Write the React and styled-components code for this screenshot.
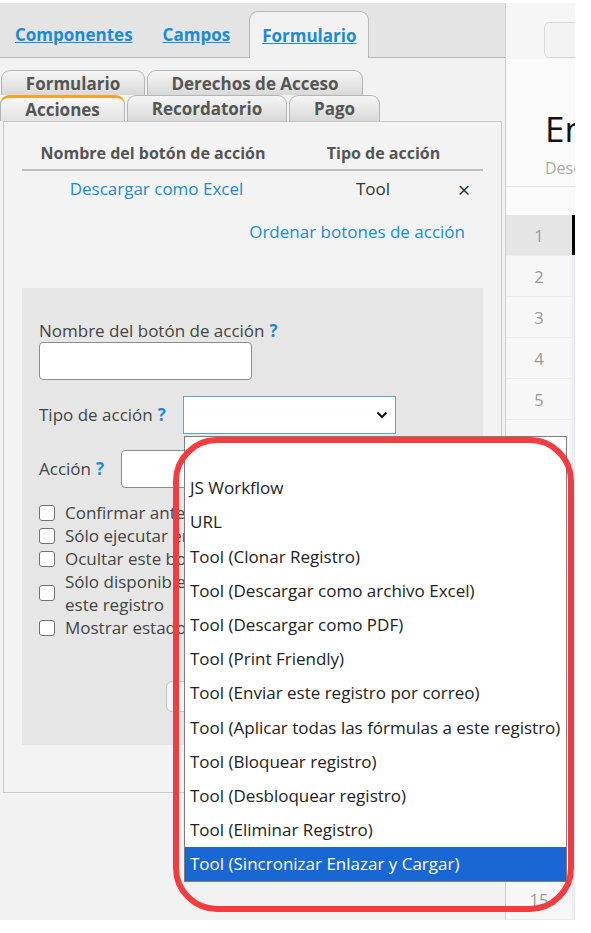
import React from 'react'
import styled, { createGlobalStyle } from 'styled-components'

const GlobalStyle = createGlobalStyle`
  body {
    margin: 0;
    background: #ffffff;
    font-family: "Open Sans", "Noto Sans", sans-serif;
  }
`

const Frame = styled.div`
  position: relative;
  display: flex;
  width: 575px;
  height: 917px;
  margin-top: 3px;
  background: #f2f2f2;
`

const LeftPane = styled.div`
  width: 505px;
  border-right: 1px solid #cfcfcf;
  display: flex;
  flex-direction: column;
`

const TopBar = styled.div`
  height: 54px;
  background: #e4e4e4;
  border-bottom: 1px solid #b8b8b8;
  display: flex;
  align-items: flex-end;
`

const TopTab = styled.a`
  height: 46px;
  display: flex;
  align-items: center;
  padding: 0 ${p => (p.$active ? 12 : 15)}px;
  margin-left: ${p => (p.$active ? 4 : 0)}px;
  font-size: 17px;
  font-weight: 700;
  color: #1b8bd3;
  text-decoration: underline;
  box-sizing: border-box;
  ${p =>
    p.$active &&
    `
    height: 47px;
    margin-bottom: -1px;
    background: #f2f2f2;
    border: 1px solid #b8b8b8;
    border-bottom: none;
    border-radius: 9px 9px 0 0;
  `}
`

const SubTabs = styled.div`
  padding-top: 12px;
`

const TabRow = styled.div`
  display: flex;
  gap: 2px;
  padding-left: ${p => p.$indent}px;
`

const SubTab = styled.div`
  width: ${p => p.$w}px;
  height: ${p => p.$h}px;
  box-sizing: border-box;
  border: 1px solid #b4b4b4;
  border-bottom: none;
  border-radius: 9px 9px 0 0;
  background: linear-gradient(#f6f6f6, #d8d8d8);
  font-size: 17px;
  font-weight: 700;
  color: #555;
  text-align: center;
  line-height: ${p => p.$h}px;
  ${p =>
    p.$active &&
    `
    border-top: 3px solid #f3a52a;
    line-height: ${p.$h - 3}px;
    background: linear-gradient(#f7f7f7, #e2e2e2);
  `}
`

const Panel = styled.div`
  margin-left: 3px;
  width: 499px;
  height: 672px;
  box-sizing: border-box;
  border: 1px solid #c9c9c9;
  background: #f3f3f3;
  padding: 14px 18px;
`

const HeadRow = styled.div`
  display: grid;
  grid-template-columns: 262px 1fr;
  height: 33px;
  border-bottom: 2px solid #bdbdbd;
  align-items: center;
  text-align: center;
  font-size: 16px;
  font-weight: 700;
  color: #555;
`

const DataRow = styled.div`
  display: grid;
  grid-template-columns: 269px 164px 18px;
  height: 35px;
  align-items: center;
  text-align: center;
  font-size: 17px;
  color: #333;
`

const LinkText = styled.span`
  color: #1b8bd3;
  font-size: 17px;
`

const CloseMark = styled.span`
  font-size: 22px;
  line-height: 22px;
  color: #333;
`

const SortLink = styled.div`
  margin-top: 14px;
  padding-right: 18px;
  text-align: right;
  line-height: 24px;
`

const FormBox = styled.div`
  margin-top: 44px;
  height: 457px;
  box-sizing: border-box;
  background: #e6e6e6;
  padding: 32px 17px 0;
  display: flex;
  flex-direction: column;
`

const Label = styled.label`
  font-size: 17px;
  color: #444;
  line-height: 22px;
  width: ${p => (p.$w ? `${p.$w}px` : 'auto')};
  flex-shrink: 0;
`

const Help = styled.span`
  color: #1b8bd3;
  font-weight: 700;
  margin-left: 5px;
`

const TextInput = styled.div`
  width: ${p => p.$w}px;
  height: 38px;
  box-sizing: border-box;
  background: #fff;
  border: 1px solid #8c8c8c;
  border-radius: 4px;
`

const InlineRow = styled.div`
  display: flex;
  align-items: center;
  margin-top: 16px;
`

const SelectWrap = styled.div`
  position: relative;
`

const SelectBox = styled.div`
  width: 213px;
  height: 38px;
  box-sizing: border-box;
  background: #fff;
  border: 1px solid #5aa3d9;
  display: flex;
  align-items: center;
  justify-content: flex-end;
  padding-right: 6px;
`

const Dropdown = styled.div`
  position: absolute;
  top: 40px;
  left: 1px;
  width: 383px;
  box-sizing: border-box;
  background: #fff;
  border: 1px solid #7d7d7d;
  z-index: 5;
`

const Option = styled.div`
  height: 34.2px;
  line-height: 34px;
  padding-left: 5px;
  font-size: 17px;
  color: ${p => (p.$selected ? '#fff' : '#222')};
  background: ${p => (p.$selected ? '#1967d2' : 'transparent')};
  white-space: nowrap;
`

const CheckList = styled.div`
  margin-top: 13px;
  display: flex;
  flex-direction: column;
`

const CheckRow = styled.div`
  display: flex;
  align-items: center;
  gap: 10px;
  font-size: 17px;
  line-height: 23px;
  color: #444;
  white-space: nowrap;
`

const Box = styled.span`
  width: 16px;
  height: 16px;
  box-sizing: border-box;
  border: 1.5px solid #707070;
  border-radius: 3px;
  background: #fff;
  flex-shrink: 0;
`

const SaveButton = styled.div`
  align-self: center;
  margin-top: 42px;
  width: 174px;
  height: 31px;
  box-sizing: border-box;
  border: 1px solid #c3c3c3;
  border-radius: 6px;
  background: #f5f5f5;
  font-size: 15px;
  color: #333;
  text-align: center;
  line-height: 29px;
`

const RightPane = styled.div`
  flex: 1;
  overflow: hidden;
  background: #fafafa;
  display: flex;
  flex-direction: column;
`

const RightTop = styled.div`
  height: 62px;
  box-sizing: border-box;
  background: #f6f6f6;
  padding: 19px 0 0 38px;
`

const GhostButton = styled.div`
  width: 80px;
  height: 36px;
  box-sizing: border-box;
  border: 1px solid #dadada;
  border-radius: 5px;
  background: #f3f3f3;
`

const Title = styled.div`
  margin-top: 51px;
  padding-left: 39px;
  font-size: 35px;
  line-height: 38px;
  color: #111;
  white-space: nowrap;
`

const SubTitle = styled.div`
  margin-top: 9px;
  padding-left: 39px;
  font-size: 16px;
  line-height: 22px;
  color: #aaa;
  white-space: nowrap;
`

const Grid = styled.div`
  margin-top: 7px;
  border-top: 1px solid #e6e6e6;
  padding-top: 28px;
  display: flex;
  flex-direction: column;
`

const NumRow = styled.div`
  display: flex;
  height: ${p => p.$h}px;
  flex-shrink: 0;
  border-bottom: 1px solid #ececec;
`

const NumCell = styled.div`
  width: 66px;
  flex-shrink: 0;
  display: flex;
  align-items: center;
  justify-content: center;
  font-size: 16.5px;
  color: #9a9a9a;
  background: ${p => (p.$on ? '#e5e5e5' : '#f7f7f7')};
`

const Marker = styled.div`
  width: 3px;
  background: ${p => (p.$on ? '#000' : '#e9ecf3')};
`

const Annotation = styled.div`
  position: absolute;
  left: 173px;
  top: 434px;
  width: 401px;
  height: 475px;
  box-sizing: border-box;
  border: 6px solid #f33c40;
  border-radius: 44px;
  pointer-events: none;
  z-index: 10;
`

const Chevron = () => (
  <svg width="14" height="14" viewBox="0 0 14 14">
    <path d="M2.5 4.5 L7 9 L11.5 4.5" fill="none" stroke="#111" strokeWidth="2" />
  </svg>
)

const OPTIONS = [
  '',
  'JS Workflow',
  'URL',
  'Tool (Clonar Registro)',
  'Tool (Descargar como archivo Excel)',
  'Tool (Descargar como PDF)',
  'Tool (Print Friendly)',
  'Tool (Enviar este registro por correo)',
  'Tool (Aplicar todas las fórmulas a este registro)',
  'Tool (Bloquear registro)',
  'Tool (Desbloquear registro)',
  'Tool (Eliminar Registro)',
  'Tool (Sincronizar Enlazar y Cargar)',
]

const ROWS = [
  { n: 1, h: 40 },
  { n: 2, h: 40 },
  { n: 3, h: 40 },
  { n: 4, h: 40 },
  { n: 5, h: 40 },
  { n: 6, h: 50 },
  { n: 7, h: 50 },
  { n: 8, h: 50 },
  { n: 9, h: 50 },
  { n: 10, h: 50 },
  { n: 11, h: 50 },
  { n: 12, h: 50 },
  { n: 13, h: 50 },
  { n: 14, h: 50 },
  { n: 15, h: 40 },
]

export default function App() {
  return (
    <>
      <GlobalStyle />
      <Frame>
        <LeftPane>
          <TopBar>
            <TopTab>Componentes</TopTab>
            <TopTab>Campos</TopTab>
            <TopTab $active>Formulario</TopTab>
          </TopBar>

          <SubTabs>
            <TabRow $indent={1}>
              <SubTab $w={144} $h={25}>Formulario</SubTab>
              <SubTab $w={216} $h={25}>Derechos de Acceso</SubTab>
            </TabRow>
            <TabRow $indent={0}>
              <SubTab $w={125} $h={26} $active>Acciones</SubTab>
              <SubTab $w={160} $h={26}>Recordatorio</SubTab>
              <SubTab $w={91} $h={26}>Pago</SubTab>
            </TabRow>
          </SubTabs>

          <Panel>
            <HeadRow>
              <span>Nombre del botón de acción</span>
              <span>Tipo de acción</span>
            </HeadRow>
            <DataRow>
              <LinkText>Descargar como Excel</LinkText>
              <span>Tool</span>
              <CloseMark>×</CloseMark>
            </DataRow>
            <SortLink>
              <LinkText>Ordenar botones de acción</LinkText>
            </SortLink>

            <FormBox>
              <Label>
                Nombre del botón de acción<Help>?</Help>
              </Label>
              <TextInput $w={213} />

              <InlineRow>
                <Label $w={144}>
                  Tipo de acción<Help>?</Help>
                </Label>
                <SelectWrap>
                  <SelectBox>
                    <Chevron />
                  </SelectBox>
                  <Dropdown>
                    {OPTIONS.map((o, i) => (
                      <Option key={i} $selected={i === OPTIONS.length - 1}>
                        {o}
                      </Option>
                    ))}
                  </Dropdown>
                </SelectWrap>
              </InlineRow>

              <InlineRow>
                <Label $w={82}>
                  Acción<Help>?</Help>
                </Label>
                <TextInput $w={213} />
              </InlineRow>

              <CheckList>
                <CheckRow><Box />Confirmar antes de ejecutar</CheckRow>
                <CheckRow><Box />Sólo ejecutar en modo edición</CheckRow>
                <CheckRow><Box />Ocultar este botón</CheckRow>
                <CheckRow><Box /><span>Sólo disponible cuando se puede editar<br />este registro</span></CheckRow>
                <CheckRow><Box />Mostrar estado de ejecución</CheckRow>
              </CheckList>

              <SaveButton>Guardar</SaveButton>
            </FormBox>
          </Panel>
        </LeftPane>

        <RightPane>
          <RightTop>
            <GhostButton />
          </RightTop>
          <Title>Entradas</Title>
          <SubTitle>Descripción</SubTitle>
          <Grid>
            {ROWS.map(r => (
              <NumRow key={r.n} $h={r.h}>
                <NumCell $on={r.n === 1}>{r.n}</NumCell>
                <Marker $on={r.n === 1} />
              </NumRow>
            ))}
          </Grid>
        </RightPane>

        <Annotation />
      </Frame>
    </>
  )
}
